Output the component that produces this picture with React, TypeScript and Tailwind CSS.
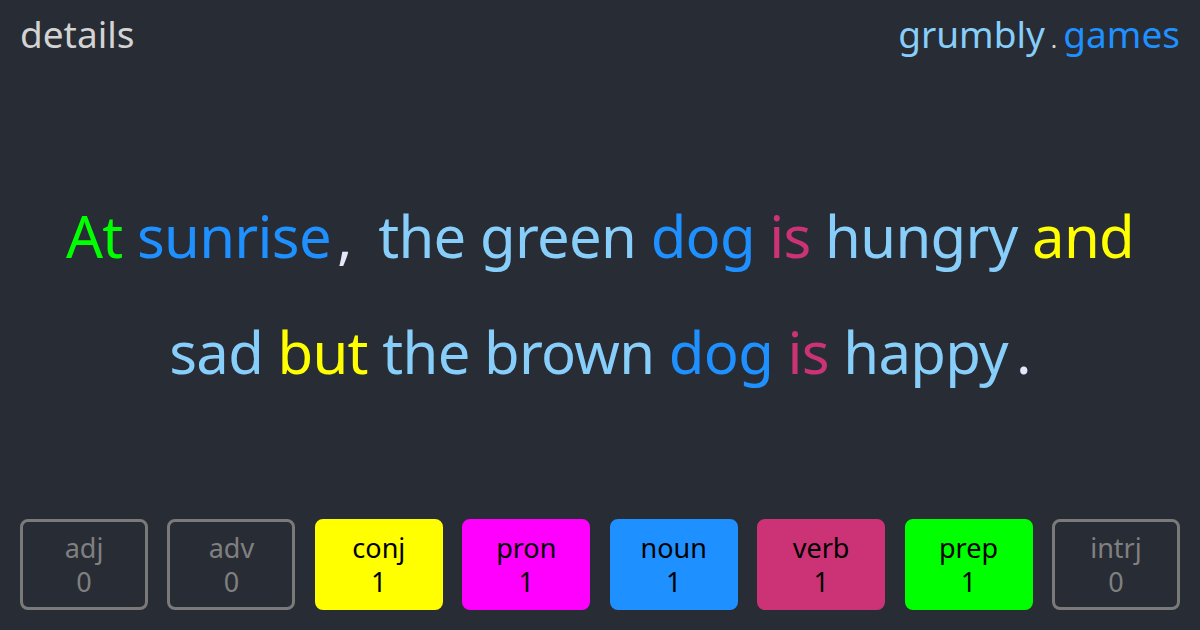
import React from 'react';

type Word = { text: string; color: string };

const line1b: Word[] = [
  { text: 'the', color: 'text-[#87cefa]' },
  { text: 'green', color: 'text-[#87cefa]' },
  { text: 'dog', color: 'text-[#1e90ff]' },
  { text: 'is', color: 'text-[#cc3377]' },
  { text: 'hungry', color: 'text-[#87cefa]' },
  { text: 'and', color: 'text-[#ffff00]' },
];

const line2: Word[] = [
  { text: 'sad', color: 'text-[#87cefa]' },
  { text: 'but', color: 'text-[#ffff00]' },
  { text: 'the', color: 'text-[#87cefa]' },
  { text: 'brown', color: 'text-[#87cefa]' },
  { text: 'dog', color: 'text-[#1e90ff]' },
  { text: 'is', color: 'text-[#cc3377]' },
];

const parts = [
  { label: 'adj', count: 0, cls: 'border-[#7a7a7a] text-[#808080]' },
  { label: 'adv', count: 0, cls: 'border-[#7a7a7a] text-[#808080]' },
  { label: 'conj', count: 1, cls: 'border-[#ffff00] bg-[#ffff00] text-black' },
  { label: 'pron', count: 1, cls: 'border-[#ff00ff] bg-[#ff00ff] text-black' },
  { label: 'noun', count: 1, cls: 'border-[#1e90ff] bg-[#1e90ff] text-black' },
  { label: 'verb', count: 1, cls: 'border-[#cc3377] bg-[#cc3377] text-black' },
  { label: 'prep', count: 1, cls: 'border-[#00ff00] bg-[#00ff00] text-black' },
  { label: 'intrj', count: 0, cls: 'border-[#7a7a7a] text-[#808080]' },
];

const Words = ({ words }: { words: Word[] }) => (
  <>
    {words.map((w, i) => (
      <span key={i} className={w.color}>
        {w.text}{' '}
      </span>
    ))}
  </>
);

export default function App() {
  return (
    <div className="w-[1200px] h-[630px] bg-[#282c34] flex flex-col font-['Noto_Sans',sans-serif] overflow-hidden">
      {/* Header */}
      <div className="flex items-center justify-between px-[20px] h-[68px]">
        <span className="text-[37px] text-[#d3d3d3]">details</span>
        <span className="text-[37px]">
          <span className="text-[#87cefa]">grumbly</span>
          <span className="text-[#d3d3d3] text-[24px] mx-[6px]">.</span>
          <span className="text-[#1e90ff]">games</span>
        </span>
      </div>

      {/* Sentence */}
      <div className="flex-1 flex items-center justify-center px-[30px]">
        <p className="text-center text-[58px] leading-[116px] tracking-[-0.7px]">
          <span className="text-[#00ff00]">At </span>
          <span className="text-[#1e90ff]">sunrise</span>
          <span className="text-[#e6e6fa] ml-[6px] mr-[12px]">,</span>{' '}
          <Words words={line1b} />
          <br />
          <Words words={line2} />
          <span className="text-[#87cefa]">happy</span>
          <span className="text-[#e6e6fa] ml-[8px]">.</span>
        </p>
      </div>

      {/* Parts of speech */}
      <div className="flex justify-between px-[20px] pb-[20px]">
        {parts.map((p) => (
          <div
            key={p.label}
            className={`w-[128px] h-[91px] rounded-[8px] border-[3px] flex flex-col items-center justify-center text-[27px] leading-[34px] ${p.cls}`}
          >
            <span>{p.label}</span>
            <span>{p.count}</span>
          </div>
        ))}
      </div>
    </div>
  );
}
